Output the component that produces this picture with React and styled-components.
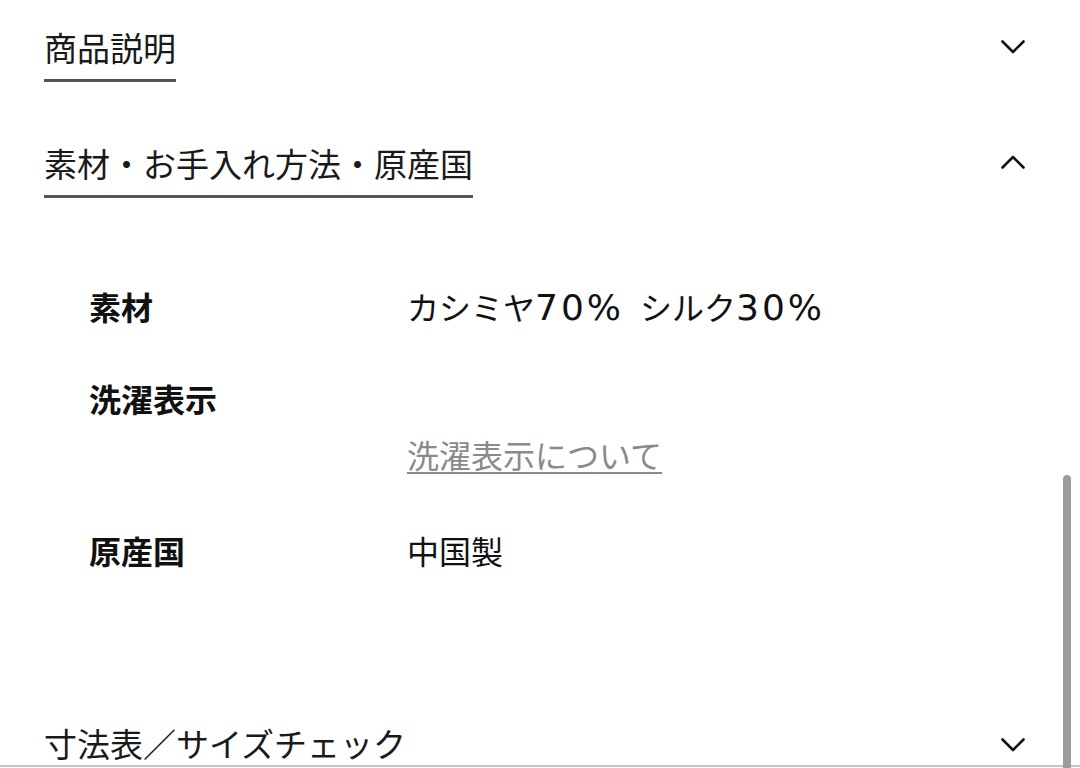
import React from 'react';
import styled, { createGlobalStyle } from 'styled-components';

const GlobalStyle = createGlobalStyle`
  html, body {
    margin: 0;
    padding: 0;
    background: #ffffff;
    overflow: hidden;
  }
  body {
    font-family: "Noto Sans CJK JP", "Noto Sans", sans-serif;
    color: #1a1a1a;
  }
`;

const Page = styled.div`
  position: relative;
  width: 1080px;
  height: 768px;
  overflow: hidden;
`;

const Inner = styled.div`
  padding: 0 55px 0 44px;
`;

const Header = styled.div`
  display: flex;
  align-items: flex-start;
  justify-content: space-between;
  padding-top: ${props => props.$top}px;
`;

const Title = styled.div`
  font-size: 33px;
  line-height: ${props => props.$lh || 46}px;
  font-weight: 400;
  padding-bottom: ${props => (props.$open ? 9 : 0)}px;
  border-bottom: ${props => (props.$open ? '3px solid #555555' : 'none')};
`;

const Chevron = styled.svg`
  width: 24px;
  height: 14px;
  margin-top: ${props => props.$offset}px;
  flex-shrink: 0;
`;

const Details = styled.div`
  display: grid;
  grid-template-columns: 318px 1fr;
  row-gap: 44px;
  padding: 85px 0 0 45px;
`;

const Label = styled.div`
  font-size: 32px;
  line-height: 46px;
  font-weight: 700;
  color: #111111;
`;

const Value = styled.div`
  font-size: 32px;
  line-height: 46px;
  font-weight: 400;
  color: #111111;
`;

const Num = styled.span`
  font-family: "DejaVu Sans", "Noto Sans CJK JP", sans-serif;
  font-size: 36px;
  font-weight: 400;
  letter-spacing: 3px;
  margin-right: ${props => props.$gap || 0}px;
`;

const CareIcons = styled.div`
  height: 56px;
`;

const CareLink = styled.a`
  display: block;
  font-size: 32px;
  line-height: 46px;
  color: #8a8a8a;
  text-decoration: underline;
  text-decoration-thickness: 2px;
  text-underline-offset: 4px;
  margin-bottom: 6px;
`;

const Divider = styled.div`
  height: 2px;
  background: #c4c4c4;
`;

const Scrollbar = styled.div`
  position: absolute;
  right: 9px;
  top: 475px;
  bottom: 0;
  width: 8px;
  border-radius: 4px 4px 0 0;
  background: #9c9c9c;
`;

const ChevronIcon = ({ up, offset }) => (
  <Chevron viewBox="0 0 24 14" $offset={offset}>
    <polyline
      points={up ? '1.5,12.5 12,2 22.5,12.5' : '1.5,1.5 12,12 22.5,1.5'}
      fill="none"
      stroke="#111"
      strokeWidth="2.6"
      strokeLinecap="round"
      strokeLinejoin="round"
    />
  </Chevron>
);

const App = () => {
  return (
    <Page>
      <GlobalStyle />
      <Inner>
        <Header $top={24}>
          <Title $open>商品説明</Title>
          <ChevronIcon offset={16} />
        </Header>

        <Header $top={58}>
          <Title $open>素材・お手入れ方法・原産国</Title>
          <ChevronIcon up offset={15} />
        </Header>

        <Details>
          <Label>素材</Label>
          <Value>
            カシミヤ<Num $gap={16}>70%</Num>シルク<Num>30%</Num>
          </Value>

          <Label>洗濯表示</Label>
          <Value>
            <CareIcons />
            <CareLink href="#">洗濯表示について</CareLink>
          </Value>

          <Label>原産国</Label>
          <Value>中国製</Value>
        </Details>

        <Header $top={149}>
          <Title $lh={43}>寸法表／サイズチェック</Title>
          <ChevronIcon offset={16} />
        </Header>
      </Inner>
      <Divider />
      <Scrollbar />
    </Page>
  );
};

export default App;
